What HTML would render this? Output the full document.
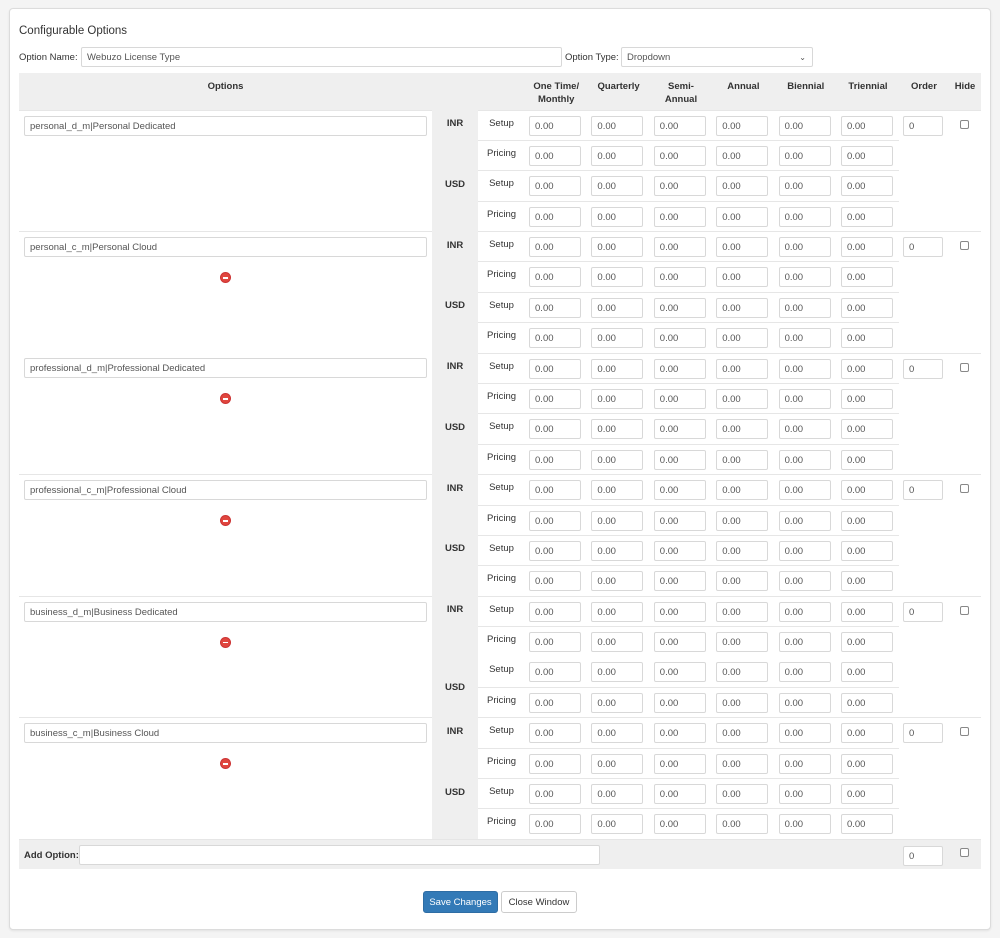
<!DOCTYPE html>
<html><head><meta charset="utf-8"><style>
*{box-sizing:border-box}
body{margin:0;background:#f4f4f4;font-family:"Liberation Sans",sans-serif;font-size:9.5px;color:#333;width:1000px;height:938px;overflow:hidden}
.panel{position:absolute;left:9px;top:8px;width:982px;height:922px;background:#fff;border:1px solid #dcdcdc;border-radius:4px;box-shadow:0 1px 2px rgba(0,0,0,.08)}
h1{position:absolute;left:19px;top:25px;margin:0;font-size:11.5px;font-weight:normal;color:#333}
.inp{border:1px solid #d8d8d8;border-radius:2px;height:20px;padding:0 5px;line-height:19px;font-size:9.5px;color:#555;background:#fff;display:block}
.abs{position:absolute}
table{position:absolute;left:19px;top:73px;width:962px;border-collapse:collapse;table-layout:fixed}
td,th{padding:0;vertical-align:top}
th{background:#efefef;font-weight:bold;font-size:9.5px;height:37px;text-align:center;padding-top:7px;line-height:13px}
tr.r td{height:30.4px}
td.o{border-top:1px solid #e6e6e6}
td.c{background:#efefef;text-align:center;font-weight:bold;padding-top:8px}
td.l{text-align:center;padding-top:7px;border-top:1px solid #e6e6e6}
td.p{border-top:1px solid #e6e6e6;padding:5px 0 0 4px}
td.p .inp{width:52px}
td.x{border-top:1px solid #e6e6e6;padding:5px 0 0 4px}
td.x .inp{width:40px}
td.h{border-top:1px solid #e6e6e6;text-align:center;padding-top:9px}
.cb{display:inline-block;width:9px;height:9px;border:1px solid #888;border-radius:2px;background:#fff}
td.o .inp{margin:5px 5px 0 5px;width:403px}
.rm{display:block;width:9px;height:9px;border-radius:50%;background:#e0463e;margin:16px auto 0;position:relative;box-shadow:0 0 0 1px #c33}
.rm:after{content:"";position:absolute;left:2px;top:4px;width:5px;height:1.5px;background:#fff}
.add td{background:#efefef;height:30px;border-top:1px solid #e6e6e6}
.btn{position:absolute;top:891px;height:22px;border-radius:3px;font-size:9.5px;line-height:21px;text-align:center}
</style></head><body>
<div class="panel"></div>
<h1>Configurable Options</h1>
<div class="abs" style="left:19px;top:52px">Option Name:</div>
<div class="abs inp" style="left:81px;top:47px;width:481px">Webuzo License Type</div>
<div class="abs" style="left:565px;top:52px">Option Type:</div>
<div class="abs inp" style="left:621px;top:47px;width:192px">Dropdown<span style="position:absolute;right:6px;top:0;font-size:8px">&#8964;</span></div>
<table>
<colgroup><col style="width:413px"><col style="width:46px"><col style="width:47px"><col style="width:62.4px"><col style="width:62.4px"><col style="width:62.4px"><col style="width:62.4px"><col style="width:62.4px"><col style="width:62px"><col style="width:50px"><col style="width:32px"></colgroup>
<tr><th>Options</th><th></th><th></th><th>One Time/<br>Monthly</th><th>Quarterly</th><th>Semi-<br>Annual</th><th>Annual</th><th>Biennial</th><th>Triennial</th><th>Order</th><th>Hide</th></tr>

<tr class="r"><td class="o" rowspan="4"><div class="inp">personal_d_m|Personal Dedicated</div></td><td class="c" rowspan="2">INR</td><td class="l">Setup</td><td class="p"><div class="inp">0.00</div></td><td class="p"><div class="inp">0.00</div></td><td class="p"><div class="inp">0.00</div></td><td class="p"><div class="inp">0.00</div></td><td class="p"><div class="inp">0.00</div></td><td class="p"><div class="inp">0.00</div></td><td class="x" rowspan="4"><div class="inp">0</div></td><td class="h" rowspan="4"><span class="cb"></span></td></tr>
<tr class="r"><td class="l">Pricing</td><td class="p"><div class="inp">0.00</div></td><td class="p"><div class="inp">0.00</div></td><td class="p"><div class="inp">0.00</div></td><td class="p"><div class="inp">0.00</div></td><td class="p"><div class="inp">0.00</div></td><td class="p"><div class="inp">0.00</div></td></tr>
<tr class="r"><td class="c" rowspan="2">USD</td><td class="l">Setup</td><td class="p"><div class="inp">0.00</div></td><td class="p"><div class="inp">0.00</div></td><td class="p"><div class="inp">0.00</div></td><td class="p"><div class="inp">0.00</div></td><td class="p"><div class="inp">0.00</div></td><td class="p"><div class="inp">0.00</div></td></tr>
<tr class="r"><td class="l">Pricing</td><td class="p"><div class="inp">0.00</div></td><td class="p"><div class="inp">0.00</div></td><td class="p"><div class="inp">0.00</div></td><td class="p"><div class="inp">0.00</div></td><td class="p"><div class="inp">0.00</div></td><td class="p"><div class="inp">0.00</div></td></tr>

<tr class="r"><td class="o" rowspan="4"><div class="inp">personal_c_m|Personal Cloud</div><span class="rm"></span></td><td class="c" rowspan="2">INR</td><td class="l">Setup</td><td class="p"><div class="inp">0.00</div></td><td class="p"><div class="inp">0.00</div></td><td class="p"><div class="inp">0.00</div></td><td class="p"><div class="inp">0.00</div></td><td class="p"><div class="inp">0.00</div></td><td class="p"><div class="inp">0.00</div></td><td class="x" rowspan="4"><div class="inp">0</div></td><td class="h" rowspan="4"><span class="cb"></span></td></tr>
<tr class="r"><td class="l">Pricing</td><td class="p"><div class="inp">0.00</div></td><td class="p"><div class="inp">0.00</div></td><td class="p"><div class="inp">0.00</div></td><td class="p"><div class="inp">0.00</div></td><td class="p"><div class="inp">0.00</div></td><td class="p"><div class="inp">0.00</div></td></tr>
<tr class="r"><td class="c" rowspan="2">USD</td><td class="l">Setup</td><td class="p"><div class="inp">0.00</div></td><td class="p"><div class="inp">0.00</div></td><td class="p"><div class="inp">0.00</div></td><td class="p"><div class="inp">0.00</div></td><td class="p"><div class="inp">0.00</div></td><td class="p"><div class="inp">0.00</div></td></tr>
<tr class="r"><td class="l">Pricing</td><td class="p"><div class="inp">0.00</div></td><td class="p"><div class="inp">0.00</div></td><td class="p"><div class="inp">0.00</div></td><td class="p"><div class="inp">0.00</div></td><td class="p"><div class="inp">0.00</div></td><td class="p"><div class="inp">0.00</div></td></tr>

<tr class="r"><td class="o" rowspan="4" style="border-top:none"><div class="inp">professional_d_m|Professional Dedicated</div><span class="rm"></span></td><td class="c" rowspan="2">INR</td><td class="l">Setup</td><td class="p"><div class="inp">0.00</div></td><td class="p"><div class="inp">0.00</div></td><td class="p"><div class="inp">0.00</div></td><td class="p"><div class="inp">0.00</div></td><td class="p"><div class="inp">0.00</div></td><td class="p"><div class="inp">0.00</div></td><td class="x" rowspan="4"><div class="inp">0</div></td><td class="h" rowspan="4"><span class="cb"></span></td></tr>
<tr class="r"><td class="l">Pricing</td><td class="p"><div class="inp">0.00</div></td><td class="p"><div class="inp">0.00</div></td><td class="p"><div class="inp">0.00</div></td><td class="p"><div class="inp">0.00</div></td><td class="p"><div class="inp">0.00</div></td><td class="p"><div class="inp">0.00</div></td></tr>
<tr class="r"><td class="c" rowspan="2">USD</td><td class="l">Setup</td><td class="p"><div class="inp">0.00</div></td><td class="p"><div class="inp">0.00</div></td><td class="p"><div class="inp">0.00</div></td><td class="p"><div class="inp">0.00</div></td><td class="p"><div class="inp">0.00</div></td><td class="p"><div class="inp">0.00</div></td></tr>
<tr class="r"><td class="l">Pricing</td><td class="p"><div class="inp">0.00</div></td><td class="p"><div class="inp">0.00</div></td><td class="p"><div class="inp">0.00</div></td><td class="p"><div class="inp">0.00</div></td><td class="p"><div class="inp">0.00</div></td><td class="p"><div class="inp">0.00</div></td></tr>

<tr class="r"><td class="o" rowspan="4"><div class="inp">professional_c_m|Professional Cloud</div><span class="rm"></span></td><td class="c" rowspan="2">INR</td><td class="l">Setup</td><td class="p"><div class="inp">0.00</div></td><td class="p"><div class="inp">0.00</div></td><td class="p"><div class="inp">0.00</div></td><td class="p"><div class="inp">0.00</div></td><td class="p"><div class="inp">0.00</div></td><td class="p"><div class="inp">0.00</div></td><td class="x" rowspan="4"><div class="inp">0</div></td><td class="h" rowspan="4"><span class="cb"></span></td></tr>
<tr class="r"><td class="l">Pricing</td><td class="p"><div class="inp">0.00</div></td><td class="p"><div class="inp">0.00</div></td><td class="p"><div class="inp">0.00</div></td><td class="p"><div class="inp">0.00</div></td><td class="p"><div class="inp">0.00</div></td><td class="p"><div class="inp">0.00</div></td></tr>
<tr class="r"><td class="c" rowspan="2">USD</td><td class="l">Setup</td><td class="p"><div class="inp">0.00</div></td><td class="p"><div class="inp">0.00</div></td><td class="p"><div class="inp">0.00</div></td><td class="p"><div class="inp">0.00</div></td><td class="p"><div class="inp">0.00</div></td><td class="p"><div class="inp">0.00</div></td></tr>
<tr class="r"><td class="l">Pricing</td><td class="p"><div class="inp">0.00</div></td><td class="p"><div class="inp">0.00</div></td><td class="p"><div class="inp">0.00</div></td><td class="p"><div class="inp">0.00</div></td><td class="p"><div class="inp">0.00</div></td><td class="p"><div class="inp">0.00</div></td></tr>

<tr class="r"><td class="o" rowspan="4"><div class="inp">business_d_m|Business Dedicated</div><span class="rm"></span></td><td class="c" rowspan="2">INR</td><td class="l">Setup</td><td class="p"><div class="inp">0.00</div></td><td class="p"><div class="inp">0.00</div></td><td class="p"><div class="inp">0.00</div></td><td class="p"><div class="inp">0.00</div></td><td class="p"><div class="inp">0.00</div></td><td class="p"><div class="inp">0.00</div></td><td class="x" rowspan="4"><div class="inp">0</div></td><td class="h" rowspan="4"><span class="cb"></span></td></tr>
<tr class="r"><td class="l">Pricing</td><td class="p"><div class="inp">0.00</div></td><td class="p"><div class="inp">0.00</div></td><td class="p"><div class="inp">0.00</div></td><td class="p"><div class="inp">0.00</div></td><td class="p"><div class="inp">0.00</div></td><td class="p"><div class="inp">0.00</div></td></tr>
<tr class="r"><td class="c" rowspan="2" style="padding-top:0;vertical-align:middle">USD</td><td class="l" style="border-top:none">Setup</td><td class="p" style="border-top:none"><div class="inp">0.00</div></td><td class="p" style="border-top:none"><div class="inp">0.00</div></td><td class="p" style="border-top:none"><div class="inp">0.00</div></td><td class="p" style="border-top:none"><div class="inp">0.00</div></td><td class="p" style="border-top:none"><div class="inp">0.00</div></td><td class="p" style="border-top:none"><div class="inp">0.00</div></td></tr>
<tr class="r"><td class="l">Pricing</td><td class="p"><div class="inp">0.00</div></td><td class="p"><div class="inp">0.00</div></td><td class="p"><div class="inp">0.00</div></td><td class="p"><div class="inp">0.00</div></td><td class="p"><div class="inp">0.00</div></td><td class="p"><div class="inp">0.00</div></td></tr>

<tr class="r"><td class="o" rowspan="4"><div class="inp">business_c_m|Business Cloud</div><span class="rm"></span></td><td class="c" rowspan="2">INR</td><td class="l">Setup</td><td class="p"><div class="inp">0.00</div></td><td class="p"><div class="inp">0.00</div></td><td class="p"><div class="inp">0.00</div></td><td class="p"><div class="inp">0.00</div></td><td class="p"><div class="inp">0.00</div></td><td class="p"><div class="inp">0.00</div></td><td class="x" rowspan="4"><div class="inp">0</div></td><td class="h" rowspan="4"><span class="cb"></span></td></tr>
<tr class="r"><td class="l">Pricing</td><td class="p"><div class="inp">0.00</div></td><td class="p"><div class="inp">0.00</div></td><td class="p"><div class="inp">0.00</div></td><td class="p"><div class="inp">0.00</div></td><td class="p"><div class="inp">0.00</div></td><td class="p"><div class="inp">0.00</div></td></tr>
<tr class="r"><td class="c" rowspan="2">USD</td><td class="l">Setup</td><td class="p"><div class="inp">0.00</div></td><td class="p"><div class="inp">0.00</div></td><td class="p"><div class="inp">0.00</div></td><td class="p"><div class="inp">0.00</div></td><td class="p"><div class="inp">0.00</div></td><td class="p"><div class="inp">0.00</div></td></tr>
<tr class="r"><td class="l">Pricing</td><td class="p"><div class="inp">0.00</div></td><td class="p"><div class="inp">0.00</div></td><td class="p"><div class="inp">0.00</div></td><td class="p"><div class="inp">0.00</div></td><td class="p"><div class="inp">0.00</div></td><td class="p"><div class="inp">0.00</div></td></tr>

<tr class="add"><td colspan="9" style="position:relative"><b style="position:absolute;left:5px;top:10px">Add Option:</b><div class="inp" style="position:absolute;left:60px;top:5px;width:521px"></div></td><td style="padding:6px 0 0 4px"><div class="inp" style="width:40px">0</div></td><td style="text-align:center;padding-top:8px"><span class="cb"></span></td></tr>
</table>
<div class="btn" style="left:423px;width:75px;background:#337ab7;border:1px solid #2e6da4;color:#fff">Save Changes</div>
<div class="btn" style="left:501px;width:76px;background:#fff;border:1px solid #ccc;color:#333">Close Window</div>
</body></html>
